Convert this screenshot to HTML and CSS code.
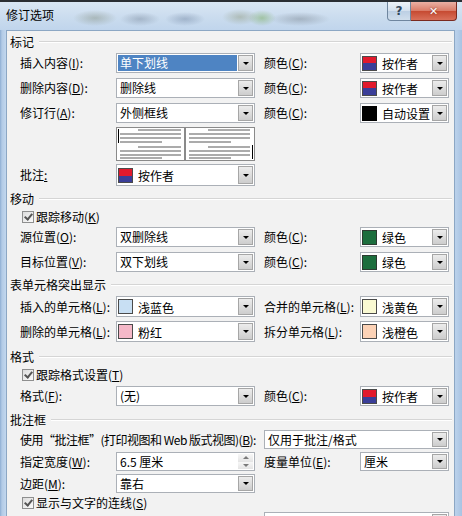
FILE: index.html
```html
<!DOCTYPE html>
<html lang="zh-CN">
<head>
    <meta charset="UTF-8">
    <title>修订选项</title>
    <link rel="stylesheet" href="styles.css">
</head>
<body>
    <div class="window">
        <div class="titlebar">
            <span class="title">修订选项</span>
            <div class="caption">
                <span class="help">?</span>
                <span class="close">✕</span>
            </div>
        </div>

        <div class="client">
            <!-- 标记 -->
            <div class="section"><span>标记</span></div>
            <div class="row mt4">
                <span class="label">插入内容(<u>I</u>):</span>
                <div class="combo selected"><span class="value">单下划线</span><span class="drop"></span></div>
                <span class="label second">颜色(<u>C</u>):</span>
                <div class="combo"><span class="swatch author"></span><span class="value">按作者</span><span class="drop"></span></div>
            </div>
            <div class="row mt5">
                <span class="label">删除内容(<u>D</u>):</span>
                <div class="combo"><span class="value">删除线</span><span class="drop"></span></div>
                <span class="label second">颜色(<u>C</u>):</span>
                <div class="combo"><span class="swatch author"></span><span class="value">按作者</span><span class="drop"></span></div>
            </div>
            <div class="row mt5">
                <span class="label">修订行(<u>A</u>):</span>
                <div class="combo"><span class="value">外侧框线</span><span class="drop"></span></div>
                <span class="label second">颜色(<u>C</u>):</span>
                <div class="combo"><span class="swatch black"></span><span class="value">自动设置</span><span class="drop"></span></div>
            </div>
            <div class="row preview-row mt4">
                <span></span>
                <svg class="preview" width="139" height="34" viewBox="0 0 139 34">
                    <rect x="0.5" y="0.5" width="138" height="33" fill="#fff" stroke="#8a8a8a"/>
                    <rect x="68" y="1" width="2" height="32" fill="#8a8a8a"/>
                    <g fill="#ababab">
                        <rect x="22" y="2" width="43" height="2"/>
                        <rect x="4" y="6" width="61" height="2"/>
                        <rect x="4" y="10" width="61" height="2"/>
                        <rect x="4" y="14" width="42" height="2"/>
                        <rect x="22" y="19" width="43" height="2"/>
                        <rect x="4" y="23" width="61" height="2"/>
                        <rect x="4" y="27" width="61" height="2"/>
                        <rect x="4" y="30" width="42" height="2"/>

                        <rect x="92" y="2" width="42" height="2"/>
                        <rect x="73" y="6" width="61" height="2"/>
                        <rect x="73" y="10" width="61" height="2"/>
                        <rect x="73" y="14" width="42" height="2"/>
                        <rect x="92" y="19" width="42" height="2"/>
                        <rect x="73" y="23" width="61" height="2"/>
                        <rect x="73" y="27" width="61" height="2"/>
                        <rect x="73" y="30" width="42" height="2"/>
                    </g>
                    <rect x="2" y="2" width="1" height="14" fill="#000"/>
                    <rect x="136" y="18" width="1" height="14" fill="#000"/>
                </svg>
            </div>
            <div class="row tall mt3">
                <span class="label">批注<u>:</u></span>
                <div class="combo"><span class="swatch author"></span><span class="value">按作者</span><span class="drop"></span></div>
            </div>

            <!-- 移动 -->
            <div class="section mt6"><span>移动</span></div>
            <label class="check-row mt3"><span class="check"></span>跟踪移动(<u>K</u>)</label>
            <div class="row mt2">
                <span class="label">源位置(<u>O</u>):</span>
                <div class="combo"><span class="value">双删除线</span><span class="drop"></span></div>
                <span class="label second">颜色(<u>C</u>):</span>
                <div class="combo"><span class="swatch green"></span><span class="value">绿色</span><span class="drop"></span></div>
            </div>
            <div class="row mt5">
                <span class="label">目标位置(<u>V</u>):</span>
                <div class="combo"><span class="value">双下划线</span><span class="drop"></span></div>
                <span class="label second">颜色(<u>C</u>):</span>
                <div class="combo"><span class="swatch green"></span><span class="value">绿色</span><span class="drop"></span></div>
            </div>

            <!-- 表单元格突出显示 -->
            <div class="section mt6"><span>表单元格突出显示</span></div>
            <div class="row cells mt4">
                <span class="label">插入的单元格(<u>L</u>):</span>
                <div class="combo"><span class="swatch light-blue"></span><span class="value">浅蓝色</span><span class="drop"></span></div>
                <span class="label second">合并的单元格(<u>L</u>):</span>
                <div class="combo"><span class="swatch light-yellow"></span><span class="value">浅黄色</span><span class="drop"></span></div>
            </div>
            <div class="row cells mt4">
                <span class="label">删除的单元格(<u>L</u>):</span>
                <div class="combo"><span class="swatch pink"></span><span class="value">粉红</span><span class="drop"></span></div>
                <span class="label second">拆分单元格(<u>L</u>):</span>
                <div class="combo"><span class="swatch light-orange"></span><span class="value">浅橙色</span><span class="drop"></span></div>
            </div>

            <!-- 格式 -->
            <div class="section mt8"><span>格式</span></div>
            <label class="check-row mt3"><span class="check"></span>跟踪格式设置(<u>T</u>)</label>
            <div class="row mt3">
                <span class="label">格式(<u>F</u>):</span>
                <div class="combo"><span class="value">(无)</span><span class="drop"></span></div>
                <span class="label second">颜色(<u>C</u>):</span>
                <div class="combo"><span class="swatch author"></span><span class="value">按作者</span><span class="drop"></span></div>
            </div>

            <!-- 批注框 -->
            <div class="section mt7"><span>批注框</span></div>
            <div class="row short mt3">
                <span class="label wide condensed">使用“批注框”(打印视图和 Web 版式视图)(<u>B</u>):</span>
                <div class="combo span-right"><span class="value">仅用于批注/格式</span><span class="drop"></span></div>
            </div>
            <div class="row short mt3">
                <span class="label">指定宽度(<u>W</u>):</span>
                <div class="combo"><span class="value">6.5 厘米</span><span class="spin"><i class="up"></i><i class="down"></i></span></div>
                <span class="label second">度量单位(<u>E</u>):</span>
                <div class="combo"><span class="value">厘米</span><span class="drop"></span></div>
            </div>
            <div class="row short mt3">
                <span class="label">边距(<u>M</u>):</span>
                <div class="combo"><span class="value">靠右</span><span class="drop"></span></div>
            </div>
            <label class="check-row mt2"><span class="check"></span>显示与文字的连线(<u>S</u>)</label>
            <div class="row mt1">
                <span class="label wide"></span>
                <div class="combo span-right"><span class="value"></span><span class="drop"></span></div>
            </div>
        </div>
    </div>
</body>
</html>
```

FILE: styles.css
```css
body {
    margin: 0;
    overflow: hidden;
    font-family: "Noto Sans CJK SC", "Liberation Sans", sans-serif;
    font-size: 12px;
    color: #000;
}

.window {
    width: 462px;
    height: 516px;
    overflow: hidden;
    background: linear-gradient(90deg, #8eaed3 0, #b3cbe6 2px, #c2d7ee 6px, #b9d0ea 456px, #a9c3e2 462px);
}

/* Aero glass title bar with blurred desktop behind it */
.titlebar {
    height: 30px;
    box-sizing: border-box;
    border-top: 2px solid #2a2e33;
    display: flex;
    align-items: flex-start;
    background:
        radial-gradient(ellipse 22px 8px at 95px 16px, rgba(120, 130, 110, 0.4), transparent),
        radial-gradient(ellipse 20px 7px at 140px 17px, rgba(110, 125, 145, 0.4), transparent),
        radial-gradient(ellipse 20px 7px at 185px 17px, rgba(100, 120, 150, 0.4), transparent),
        radial-gradient(ellipse 18px 8px at 240px 15px, rgba(140, 150, 120, 0.45), transparent),
        radial-gradient(ellipse 14px 8px at 262px 16px, rgba(120, 170, 90, 0.5), transparent),
        radial-gradient(ellipse 30px 7px at 300px 17px, rgba(110, 120, 130, 0.4), transparent),
        linear-gradient(#d9e6f3, #c9dbee 60%, #c0d5ec);
}

.title {
    padding: 5px 0 0 6px;
    line-height: 16px;
    font-size: 12px;
}

.caption {
    margin-left: auto;
    margin-right: 5px;
    display: flex;
}

.help,
.close {
    height: 19px;
    box-sizing: border-box;
    display: flex;
    align-items: center;
    justify-content: center;
}

.help {
    width: 24px;
    border: 1px solid #6f869f;
    border-top: none;
    border-radius: 0 0 0 4px;
    background: linear-gradient(#eef3f9, #d3e0ee 50%, #bccfe4 51%, #d0deec);
    color: #33475c;
    font: bold 12px "DejaVu Sans", sans-serif;
}

.close {
    width: 46px;
    border: 1px solid #7a2a20;
    border-left: none;
    border-top: none;
    border-radius: 0 0 4px 0;
    background: linear-gradient(#eab0a4, #d97a66 50%, #c64a31 51%, #d9705a);
    color: #fff;
    font: bold 11px "DejaVu Sans", sans-serif;
    text-shadow: 0 0 2px #7a2a20;
}

.client {
    margin: 0 7px 0 6px;
    height: 486px;
    box-sizing: border-box;
    padding-top: 4px;
    border: 1px solid #8ca7c4;
    border-bottom: none;
    background: #f2f2f2;
}

/* group headers with an etched rule */
.section {
    display: flex;
    align-items: center;
    height: 14px;
    line-height: 14px;
    padding: 0 2px 0 3px;
}

.section::after {
    content: "";
    flex: 1;
    margin-left: 5px;
    border-top: 1px solid #d5d5d5;
    border-bottom: 1px solid #fff;
}

.row {
    display: grid;
    grid-template-columns: 96px 139px 105px 89px;
    align-items: center;
    height: 20px;
    padding-left: 13px;
}

.row.tall { height: 22px; }
.row.cells { height: 21px; }
.row.short { height: 19px; }
.row.preview-row { height: 34px; }

.label {
    white-space: nowrap;
    line-height: 16px;
}

.label.second { padding-left: 9px; }
.label.wide { grid-column: 1 / 3; }
.label.condensed { letter-spacing: -0.5px; }

.combo {
    height: 100%;
    box-sizing: border-box;
    border: 1px solid #abb0b7;
    background: #fff;
    display: flex;
    align-items: center;
}

.combo.span-right {
    grid-column: 3 / 5;
    margin-left: 9px;
}

.combo .value {
    flex: 1;
    padding-left: 3px;
    white-space: nowrap;
    overflow: hidden;
    line-height: 16px;
}

.combo.selected .value {
    align-self: stretch;
    margin: 1px 0 1px 1px;
    padding-left: 2px;
    display: flex;
    align-items: center;
    background: #4e84c3;
    color: #fff;
}

.drop {
    width: 15px;
    align-self: stretch;
    margin: 1px;
    box-sizing: border-box;
    border: 1px solid #a6a6a6;
    background: linear-gradient(#ececec, #cdcdcd);
    display: flex;
    align-items: center;
    justify-content: center;
}

.drop::after {
    content: "";
    border-left: 3px solid transparent;
    border-right: 3px solid transparent;
    border-top: 3px solid #000;
}

.spin {
    width: 15px;
    align-self: stretch;
    margin: 1px;
    display: flex;
    flex-direction: column;
}

.spin i {
    flex: 1;
    display: flex;
    align-items: center;
    justify-content: center;
    background: linear-gradient(#f7f7f7, #e4e4e4);
}

.spin .up::after {
    content: "";
    border-left: 3px solid transparent;
    border-right: 3px solid transparent;
    border-bottom: 3px solid #7a7a7a;
}

.spin .down::after {
    content: "";
    border-left: 3px solid transparent;
    border-right: 3px solid transparent;
    border-top: 3px solid #7a7a7a;
}

.swatch {
    width: 15px;
    height: 15px;
    flex: none;
    box-sizing: border-box;
    margin: 0 5px 0 1px;
    border: 1px solid #4a4a4a;
}

.swatch + .value { padding-left: 0; padding-top: 2px; }

.author { background: linear-gradient(#e11a2d 50%, #3a3e98 50%); }
.black { background: #000; border-color: #000; }
.green { background: #1c6e3d; border-color: #2c3a30; }
.light-blue { background: #c8dff3; }
.light-yellow { background: #f9f9d2; }
.pink { background: #f5b8c8; }
.light-orange { background: #fcd2b6; }

.check-row {
    display: flex;
    align-items: center;
    height: 16px;
    padding-left: 15px;
    line-height: 16px;
}

.check {
    width: 12px;
    height: 12px;
    box-sizing: border-box;
    margin-right: 2px;
    border: 1px solid #8e8f8f;
    background: linear-gradient(135deg, #dcdcdc, #fbfbfb);
    position: relative;
}

.check::after {
    content: "";
    position: absolute;
    left: 3px;
    top: 0;
    width: 3px;
    height: 6px;
    border-right: 2px solid #555;
    border-bottom: 2px solid #555;
    transform: rotate(40deg);
}

.mt1 { margin-top: 1px; }
.mt2 { margin-top: 2px; }
.mt3 { margin-top: 3px; }
.mt4 { margin-top: 4px; }
.mt5 { margin-top: 5px; }
.mt6 { margin-top: 6px; }
.mt7 { margin-top: 7px; }
.mt8 { margin-top: 8px; }
```
